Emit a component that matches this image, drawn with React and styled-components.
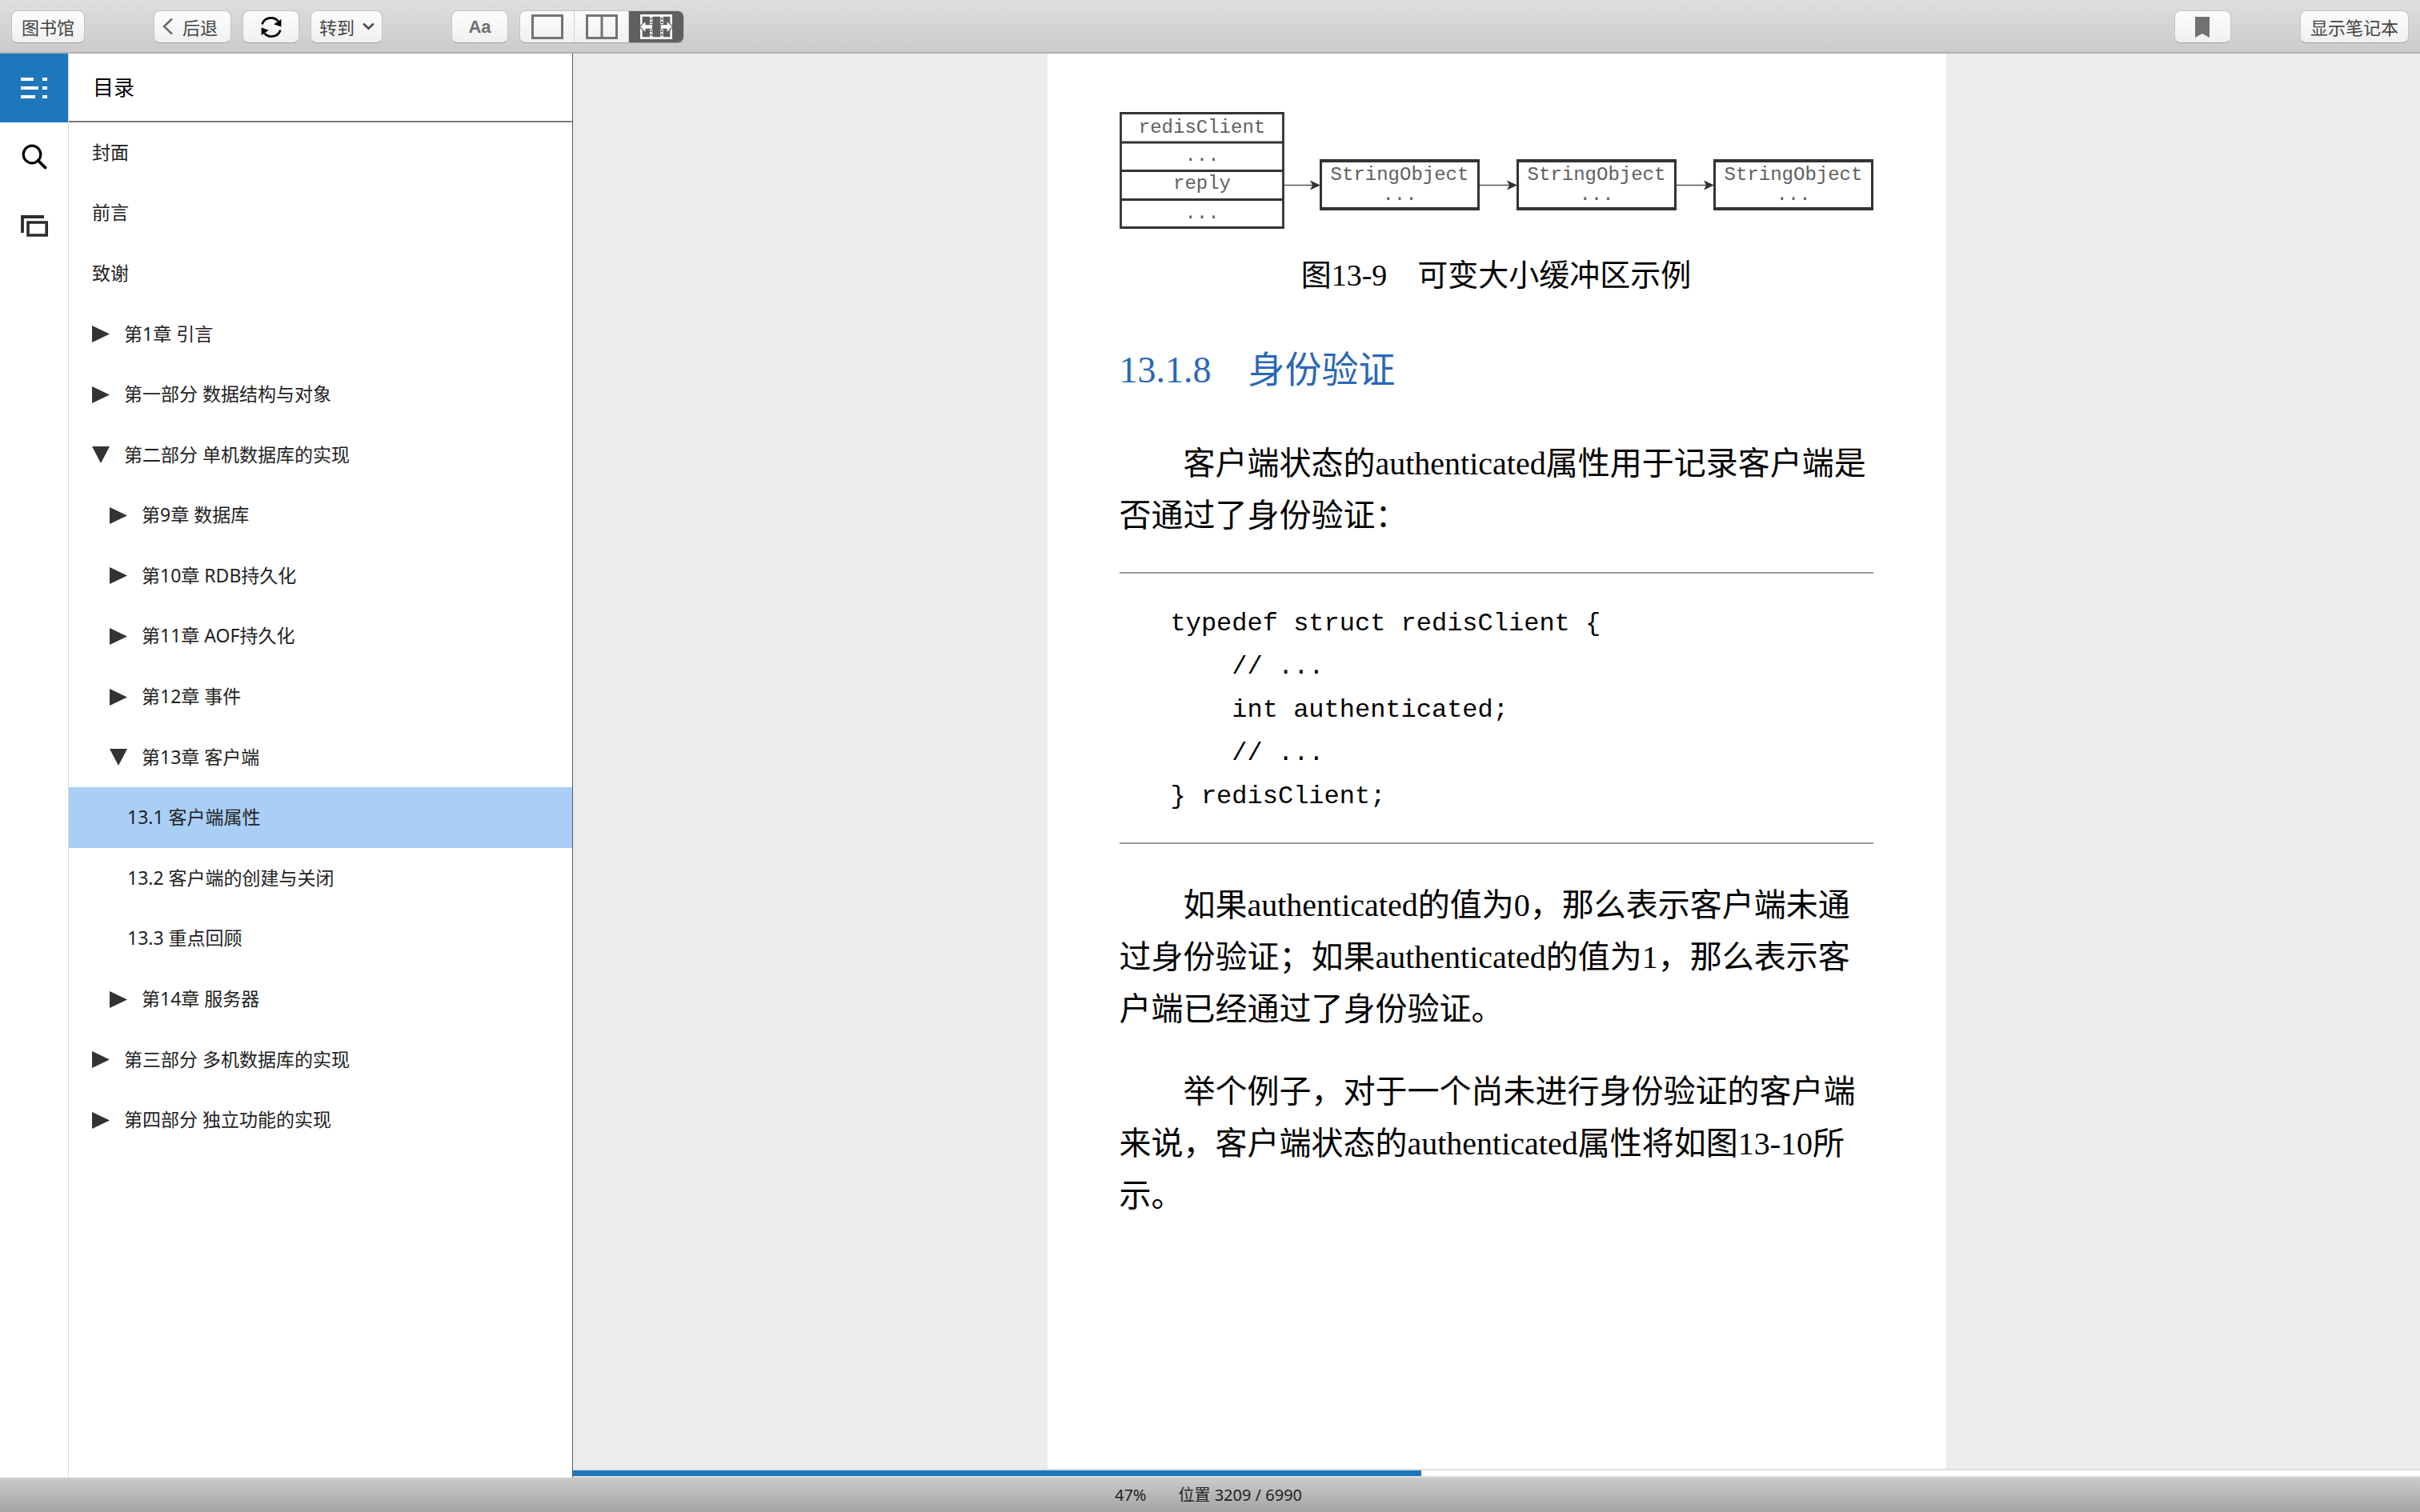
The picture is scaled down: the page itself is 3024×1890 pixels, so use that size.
import { useState } from "react";
import styled, { createGlobalStyle } from "styled-components";

const LOCATION = 3209;
const TOTAL = 6990;

const toc = [
  { title: "封面", level: 0 },
  { title: "前言", level: 0 },
  { title: "致谢", level: 0 },
  { title: "第1章 引言", level: 0, arrow: "right" },
  { title: "第一部分 数据结构与对象", level: 0, arrow: "right" },
  { title: "第二部分 单机数据库的实现", level: 0, arrow: "down" },
  { title: "第9章 数据库", level: 1, arrow: "right" },
  { title: "第10章 RDB持久化", level: 1, arrow: "right" },
  { title: "第11章 AOF持久化", level: 1, arrow: "right" },
  { title: "第12章 事件", level: 1, arrow: "right" },
  { title: "第13章 客户端", level: 1, arrow: "down" },
  { title: "13.1 客户端属性", level: 2 },
  { title: "13.2 客户端的创建与关闭", level: 2 },
  { title: "13.3 重点回顾", level: 2 },
  { title: "第14章 服务器", level: 1, arrow: "right" },
  { title: "第三部分 多机数据库的实现", level: 0, arrow: "right" },
  { title: "第四部分 独立功能的实现", level: 0, arrow: "right" },
];

const code = `typedef struct redisClient {
    // ...
    int authenticated;
    // ...
} redisClient;`;

const BackIcon = () => (
  <svg width="13" height="22" viewBox="0 0 13 22" fill="none" aria-hidden="true">
    <path d="M12 1.5 2 11l10 9.5" stroke="#6e6e6e" strokeWidth="2.6" />
  </svg>
);

const DownIcon = () => (
  <svg width="15" height="10" viewBox="0 0 15 10" fill="none" aria-hidden="true">
    <path d="M1.2 1.5 7.5 7.6l6.3-6.1" stroke="#4a4a4a" strokeWidth="2.6" />
  </svg>
);

const SyncIcon = () => (
  <svg width="26" height="26" viewBox="0 0 26 26" fill="none" aria-hidden="true">
    <path d="M1.6 9.3C3.2 4.4 7.6 1.4 12.8 1.4c3.6 0 6.6 1.5 8.7 4" stroke="#000" strokeWidth="2.7" />
    <path d="M25.4 3v9.6l-9.2-3.4z" fill="#000" />
    <path d="M24.4 16.7c-1.6 4.9-6 7.9-11.2 7.9-3.6 0-6.6-1.5-8.7-4" stroke="#000" strokeWidth="2.7" />
    <path d="M.6 23v-9.6l9.2 3.4z" fill="#000" />
  </svg>
);

const SingleIcon = () => (
  <svg width="40" height="31" viewBox="0 0 40 31" fill="none" aria-hidden="true">
    <path d="M1.5 1.5h37v28h-37z" stroke="#737373" strokeWidth="3" />
  </svg>
);

const DoubleIcon = () => (
  <svg width="40" height="31" viewBox="0 0 40 31" fill="none" aria-hidden="true">
    <path d="M1.5 1.5h37v28h-37zM20 1v29" stroke="#737373" strokeWidth="3" />
  </svg>
);

const FitIcon = () => (
  <svg width="40" height="31" viewBox="0 0 120 93" fill="none" aria-hidden="true">
    <path d="M4 4h112v85H4z" stroke="#fff" strokeWidth="8" />
    <path d="M41 4v85M81 4v85" stroke="#fff" strokeWidth="10" />
    <path
      d="M38 13h6v7h-6zM38 26h6v7h-6zM38 60h6v7h-6zM38 73h6v7h-6zM78 13h6v7h-6zM78 26h6v7h-6zM78 60h6v7h-6zM78 73h6v7h-6z"
      fill="#5f5f5f"
    />
    <g fill="#fff" stroke="#5f5f5f" strokeWidth="7" paintOrder="stroke">
      <path d="M0 46 19 28v12h26v13H19v12z" />
      <path d="M120 46 101 28v12H77v13h24v12z" />
    </g>
  </svg>
);

const BookmarkIcon = () => (
  <svg width="18" height="26" viewBox="0 0 18 26" aria-hidden="true">
    <path d="M0 0h18v26l-9-5-9 5z" fill="#717171" />
  </svg>
);

const ContentsIcon = () => (
  <svg width="34" height="26" viewBox="0 0 34 26" fill="#fff" aria-hidden="true">
    <path d="M0 0h16v4H0zM0 11h22v4H0zM0 22h18v4H0zM27 0h6v4h-6zM27 11h6v4h-6zM27 22h6v4h-6z" />
  </svg>
);

const SearchIcon = () => (
  <svg width="32" height="32" viewBox="0 0 32 32" fill="none" stroke="#000" aria-hidden="true">
    <circle cx="13" cy="13" r="10.8" strokeWidth="3.2" />
    <path d="m20.5 20.5 9 9" strokeWidth="3.8" strokeLinecap="round" />
  </svg>
);

const CardsIcon = () => (
  <svg width="34" height="27" viewBox="0 0 34 27" fill="none" stroke="#2b2b2b" aria-hidden="true">
    <path d="M29 2H2v20" strokeWidth="3.8" />
    <path d="M9 9h23.2v16H9z" strokeWidth="3.6" />
  </svg>
);

const Arrow = ({ direction }) => (
  <svg width="22" height="21" viewBox="0 0 22 21" fill="#333" aria-hidden="true">
    <path d={direction === "down" ? "M0 0h22L11 21z" : "M0 0v21l22-10.5z"} />
  </svg>
);

const Link = ({ x, width }) => (
  <>
    <path d={`M${x} 91.5h${width - 8}`} stroke="#555" strokeWidth="1.5" />
    <path d={`M${x + width} 91.5l-13-6 3 6-3 6z`} fill="#333" />
  </>
);

const BufferDiagram = () => (
  <Diagram viewBox="0 0 942 146" role="img" aria-label="可变大小缓冲区">
    <path
      d="M1.5 1.5h203v143h-203zM1 38h204M1 73.5h204M1 109.5h204"
      fill="none"
      stroke="#333"
      strokeWidth="2.8"
    />
    <text x="103" y="26">redisClient</text>
    <text x="103" y="61">...</text>
    <text x="103" y="96">reply</text>
    <text x="103" y="133">...</text>
    <Link x={206} width={45} />
    <Link x={450} width={47} />
    <Link x={696} width={47} />
    {[250, 496, 742].map((x) => (
      <g key={x}>
        <path d={`M${x} 59h200v64h-200zm3 4v56h194v-56z`} fill="#333" fillRule="evenodd" />
        <text x={x + 100} y="85">StringObject</text>
        <text x={x + 100} y="110">...</text>
      </g>
    ))}
  </Diagram>
);

const App = () => {
  const [selected, setSelected] = useState("13.1 客户端属性");

  return (
    <Wrapper lang="zh-CN">
      <GlobalStyle />
      <Toolbar>
        <ToolButton>图书馆</ToolButton>
        <Group>
          <BackButton>
            <BackIcon />
            后退
          </BackButton>
          <IconButton aria-label="同步">
            <SyncIcon />
          </IconButton>
          <MenuButton aria-haspopup="menu">
            转到
            <DownIcon />
          </MenuButton>
        </Group>
        <Group>
          <FontButton>Aa</FontButton>
          <Segments>
            <Segment aria-label="单栏">
              <SingleIcon />
            </Segment>
            <Segment aria-label="双栏">
              <DoubleIcon />
            </Segment>
            <Segment aria-label="适合宽度" aria-pressed="true" $active>
              <FitIcon />
            </Segment>
          </Segments>
        </Group>
        <EndGroup>
          <IconButton aria-label="书签">
            <BookmarkIcon />
          </IconButton>
          <ToolButton>显示笔记本</ToolButton>
        </EndGroup>
      </Toolbar>
      <Body>
        <Rail>
          <RailButton aria-label="目录" $active>
            <ContentsIcon />
          </RailButton>
          <RailButton aria-label="搜索">
            <SearchIcon />
          </RailButton>
          <RailButton aria-label="生词卡">
            <CardsIcon />
          </RailButton>
        </Rail>
        <Sidebar>
          <SidebarTitle>目录</SidebarTitle>
          <TocList>
            {toc.map((item) => (
              <TocItem key={item.title}>
                <TocButton
                  $level={item.level}
                  $selected={item.title === selected}
                  onClick={() => setSelected(item.title)}
                >
                  {item.arrow && <Arrow direction={item.arrow} />}
                  <TocLabel>{item.title}</TocLabel>
                </TocButton>
              </TocItem>
            ))}
          </TocList>
        </Sidebar>
        <Reader>
          <Page>
            <Figure>
              <BufferDiagram />
              <Caption>图13-9　可变大小缓冲区示例</Caption>
            </Figure>
            <Heading>13.1.8　身份验证</Heading>
            <Paragraph>
              客户端状态的authenticated属性用于记录客户端是否通过了身份验证：
            </Paragraph>
            <Code>{code}</Code>
            <Paragraph>
              如果authenticated的值为0，那么表示客户端未通过身份验证；如果authenticated的值为1，那么表示客户端已经通过了身份验证。
            </Paragraph>
            <Paragraph>
              举个例子，对于一个尚未进行身份验证的客户端来说，客户端状态的authenticated属性将如图13-10所示。
            </Paragraph>
          </Page>
          <Track
            role="progressbar"
            aria-label="阅读进度"
            aria-valuenow={LOCATION}
            aria-valuemax={TOTAL}
          >
            <Bar style={{ width: `${(LOCATION / TOTAL) * 100}%` }} />
          </Track>
        </Reader>
      </Body>
      <StatusBar>
        <span>47%</span>
        <span>
          位置 {LOCATION} / {TOTAL}
        </span>
      </StatusBar>
    </Wrapper>
  );
};

const GlobalStyle = createGlobalStyle`
  * {
    box-sizing: border-box;
  }

  body {
    margin: 0;
  }

  button {
    font-family: inherit;
    cursor: pointer;
  }

  svg {
    flex-shrink: 0;
  }
`;

const Wrapper = styled.div`
  display: flex;
  flex-direction: column;
  height: 100vh;
  background: #ffffff;
  font-family: "Noto Sans CJK SC", sans-serif;
`;

const Toolbar = styled.header`
  display: flex;
  align-items: center;
  gap: 86px;
  height: 67px;
  padding: 2px 14px 0;
  background: linear-gradient(#dfdde0, #cbcacc);
  border-bottom: 2px solid #b0afb1;
`;

const Group = styled.div`
  display: flex;
  gap: 14px;
`;

const EndGroup = styled(Group)`
  gap: 86px;
  margin-left: auto;
`;

const ToolButton = styled.button`
  display: flex;
  align-items: center;
  justify-content: center;
  height: 41px;
  padding: 0 12px 2px;
  border: 1px solid #c4c3c5;
  border-bottom-color: #a3a3a3;
  border-radius: 8px;
  background: linear-gradient(#fdfdfd, #f0f0f0);
  color: #444444;
  font-size: 22px;
  line-height: 30px;
`;

const BackButton = styled(ToolButton)`
  gap: 12px;
  padding: 0 16px 2px 10px;
`;

const MenuButton = styled(ToolButton)`
  gap: 10px;
  padding: 0 9px 2px 10px;
`;

const IconButton = styled(ToolButton)`
  width: 71px;
  padding: 0;
`;

const FontButton = styled(IconButton)`
  color: #6f6f6f;
  font-family: "Liberation Sans", sans-serif;
  font-weight: 700;
`;

const Segments = styled.div`
  display: flex;
  height: 41px;
  border: 1px solid #c4c3c5;
  border-bottom-color: #a3a3a3;
  border-radius: 8px;
  overflow: hidden;
`;

const Segment = styled.button`
  display: flex;
  align-items: center;
  justify-content: center;
  width: 68px;
  padding: 0;
  border: 0;
  border-right: ${(props) => (props.$active ? "0" : "1px solid #d0d0d0")};
  background: ${(props) =>
    props.$active ? "#5f5f5f" : "linear-gradient(#fdfdfd, #f0f0f0)"};
`;

const Body = styled.div`
  display: flex;
  flex: 1;
  min-height: 0;
`;

const Rail = styled.nav`
  display: flex;
  flex-direction: column;
  width: 86px;
  border-right: 1px solid #dadada;
`;

const RailButton = styled.button`
  display: flex;
  align-items: center;
  justify-content: center;
  height: 86px;
  padding: 0;
  border: 0;
  background: ${(props) => (props.$active ? "#1f77bb" : "transparent")};
`;

const Sidebar = styled.aside`
  width: 630px;
  border-right: 1px solid #5a5a5a;
  overflow: hidden;
`;

const SidebarTitle = styled.h2`
  height: 86px;
  margin: 0;
  padding-left: 30px;
  border-bottom: 2px solid #7d7d7d;
  color: #000000;
  font-size: 26px;
  font-weight: 400;
  line-height: 82px;
`;

const TocList = styled.ul`
  display: grid;
  grid-auto-rows: 1fr;
  min-height: 1285px;
  margin: 0;
  padding: 0;
  list-style: none;
`;

const TocItem = styled.li`
  display: flex;
`;

const TocButton = styled.button`
  display: flex;
  flex: 1;
  align-items: center;
  gap: 18px;
  padding: 0 0 0 ${(props) => 29 + props.$level * 22}px;
  border: 0;
  background: ${(props) => (props.$selected ? "#a9cff6" : "transparent")};
  color: #222222;
  font-family: "Noto Sans", "Noto Sans CJK SC", sans-serif;
  font-size: 23px;
  line-height: 30px;
  text-align: left;
`;

const TocLabel = styled.span`
  padding-bottom: 2px;
`;

const Reader = styled.main`
  display: flex;
  flex: 1;
  flex-direction: column;
  min-width: 0;
  background: #ececec;
`;

const Page = styled.article`
  flex: 1;
  width: 100%;
  max-width: 1123px;
  min-height: 0;
  margin: 0 auto;
  padding: 73px 91px 0 90px;
  background: #ffffff;
  color: #000000;
  font-family: "Liberation Serif", "Noto Sans CJK SC", serif;
  overflow: hidden;
`;

const Figure = styled.figure`
  margin: 0;
`;

const Diagram = styled.svg`
  display: block;
  width: 100%;

  text {
    fill: #606060;
    font-family: "Liberation Mono", monospace;
    font-size: 24px;
    text-anchor: middle;
  }
`;

const Caption = styled.figcaption`
  margin-top: 26px;
  font-size: 38px;
  line-height: 65px;
  text-align: center;
`;

const Heading = styled.h3`
  margin: 56px 0 54px;
  color: #2a67b8;
  font-size: 46px;
  font-weight: 400;
  line-height: 60px;
`;

const Paragraph = styled.p`
  margin: 0 0 38px;
  font-size: 40px;
  line-height: 65px;
  text-indent: 2em;
`;

const Code = styled.pre`
  margin: 0 0 44px;
  padding: 36px 64px 30px;
  border: solid #9a9a9a;
  border-width: 2px 0;
  font-family: "Liberation Mono", monospace;
  font-size: 32px;
  line-height: 54px;
`;

const Track = styled.div`
  height: 11px;
  border: solid #dedede;
  border-width: 2px 0;
  background: #ffffff;
`;

const Bar = styled.div`
  height: 100%;
  background: #1f77bb;
`;

const StatusBar = styled.footer`
  display: flex;
  align-items: center;
  justify-content: center;
  gap: 40px;
  height: 43px;
  padding-right: 4px;
  background: linear-gradient(#cbcbcb, #a3a3a3);
  color: #222222;
  font-family: "Noto Sans", "Noto Sans CJK SC", sans-serif;
  font-size: 20px;
  line-height: 26px;
`;

export default App;
